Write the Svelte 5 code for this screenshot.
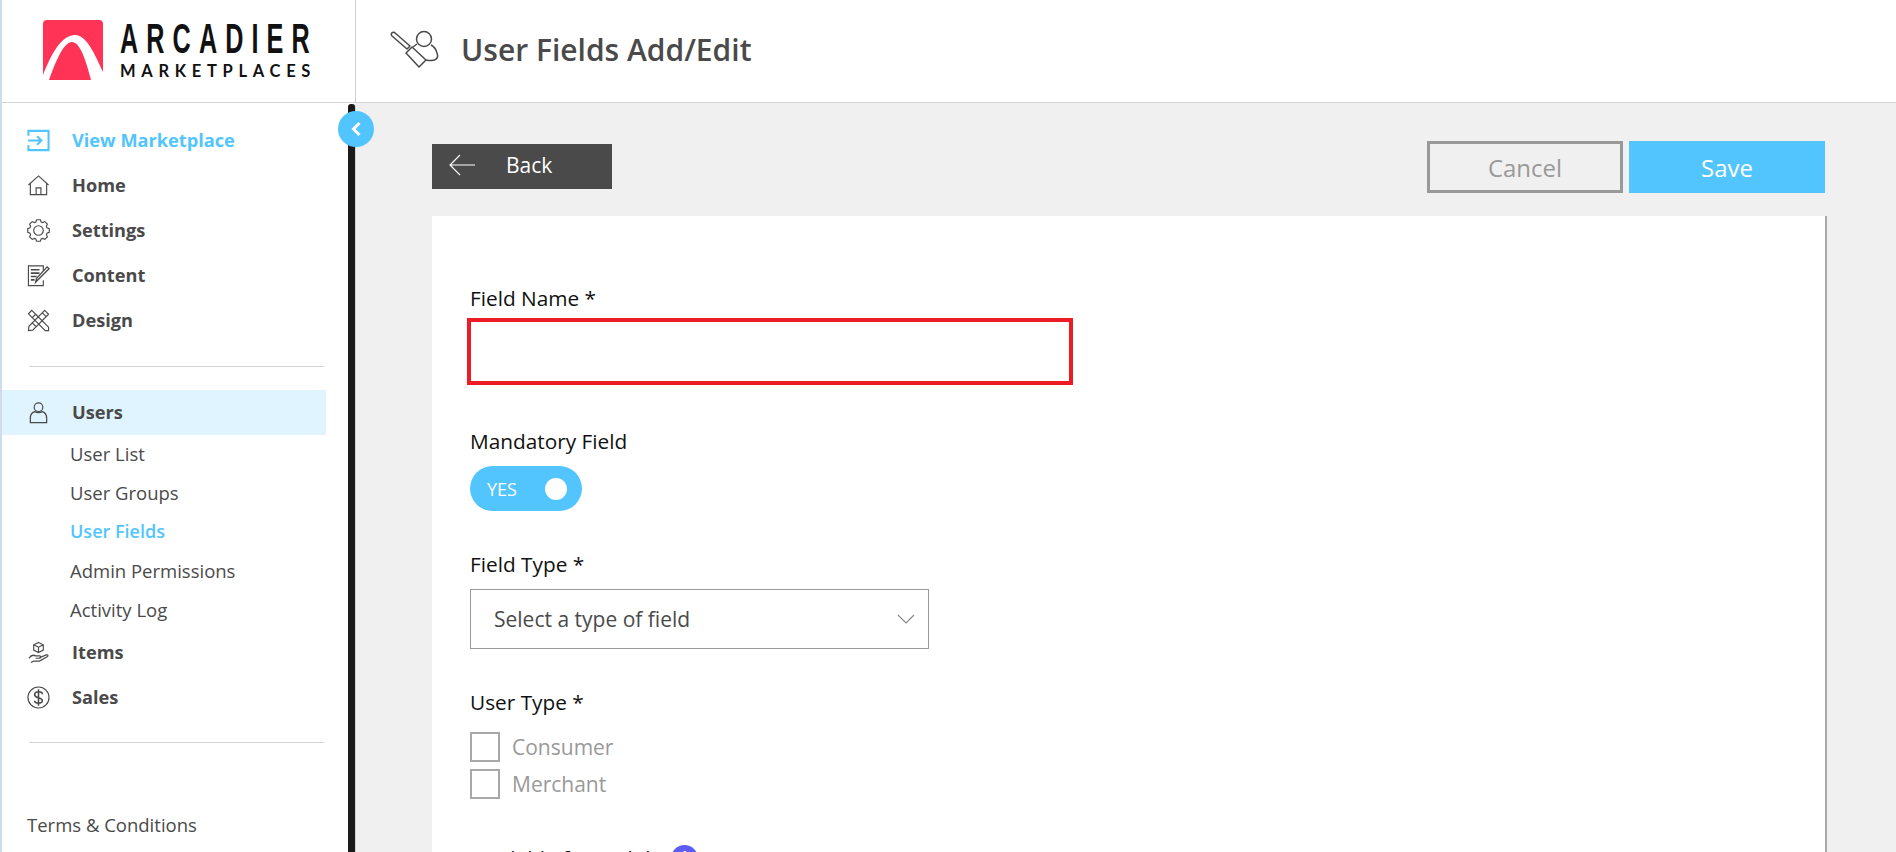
<script>
  const mainNav = [
    { label: 'Home', icon: 'home' },
    { label: 'Settings', icon: 'gear' },
    { label: 'Content', icon: 'content' },
    { label: 'Design', icon: 'design' }
  ];
  const userLinks = ['User List', 'User Groups', 'User Fields', 'Admin Permissions', 'Activity Log'];

  // cog outline with 8 teeth
  function cogPath() {
    const pts = [];
    for (let i = 0; i < 8; i++) {
      const a = (i * Math.PI) / 4;
      for (const [r, o] of [[9.3, -0.3], [11.4, -0.17], [11.4, 0.17], [9.3, 0.3]]) {
        pts.push((12 + r * Math.sin(a + o)).toFixed(2) + ' ' + (12 - r * Math.cos(a + o)).toFixed(2));
      }
    }
    return 'M' + pts.join('L') + 'z';
  }
</script>

{#snippet icon(name)}
  <svg class="nav-icon" viewBox="0 0 24 24" fill="none" stroke="currentColor" stroke-width="1.2">
    {#if name === 'view'}
      <path stroke-width="2.2" d="M1.500 7V2h21v20h-21v-5M1 12h14M10.500 7.500l4.500 4.500-4.500 4.500" />
    {:else if name === 'home'}
      <path d="M1.500 11.500L12 2l10.500 9.500M3.500 10v11.500h17V10M9.500 21.500v-7h5v7" />
    {:else if name === 'gear'}
      <circle cx="12" cy="12" r="5" />
      <path d={cogPath()} />
    {:else if name === 'content'}
      <path d="M17 7V2H1.500v20.500H17V17" />
      <path stroke-width="1.700" d="M4 6h9M4 9.500h9M4 13h6M4 16.500h4" />
      <path stroke-width="1.400" d="M9 19l1-4L21 3l2 2-11 11z" />
    {:else if name === 'design'}
      <path d="M5 1.500l4 4-3.500 3.500-4-4zM9 5.500L22.500 19v3.500H19L5.500 9" />
      <path d="M18.500 1.500l4 4L6 22l-4.500.5L2 18zM16 4l4 4M5 14l4 4" />
    {:else if name === 'users'}
      <circle cx="12" cy="6.500" r="4.500" />
      <path stroke-width="1.300" d="M3.500 22.500V18c0-4 2.500-6.500 5-7 1 1.500 6 1.500 7 0 2.500.5 5 3 5 7v4.500z" />
    {:else if name === 'items'}
      <path d="M12 1.500l5 2.500v5.500l-5 2.500-5-2.500V4zM7 4l5 2.500L17 4M12 6.500V12" />
      <path stroke-width="1.300" d="M2 18c2-3 5-3.500 7-2.500h4c2 0 2 2.500 0 2.500H9M13 17.500l7-3c2-.5 2.500 1 1 2l-8 4.500H7l-3 1.500" />
    {:else if name === 'sales'}
      <circle cx="12" cy="12" r="11" />
      <path stroke-width="1.600" d="M16 8.500C16 6.500 14 6 12 6S8 7 8 9c0 4.500 8 2 8 6.500 0 2-2 2.500-4 2.500s-4-.5-4-2.500M12 3.500v17" />
    {/if}
  </svg>
{/snippet}

<div class="page">
  <aside class="sidebar">
    <div class="logo">
      <svg class="logo-mark" viewBox="0 0 60 60">
        <rect width="60" height="60" rx="4" fill="#ff3355" />
        <path d="M0 55C8 35 18 15 32 15 44 15 52 35 60 52V60H48C42 36 36 22 29 22 20 22 12 44 6 60H0z" fill="#fff" />
      </svg>
      <div class="logo-text">
        <span class="logo-name">ARCADIER</span>
        <span class="logo-sub">MARKETPLACES</span>
      </div>
    </div>

    <nav class="nav">
      <a class="nav-item view">{@render icon('view')}View Marketplace</a>
      {#each mainNav as item}
        <a class="nav-item">{@render icon(item.icon)}{item.label}</a>
      {/each}
      <hr />
      <a class="nav-item active">{@render icon('users')}Users</a>
      <div class="sub">
        {#each userLinks as link}
          <a class:current={link === 'User Fields'}>{link}</a>
        {/each}
      </div>
      <a class="nav-item">{@render icon('items')}Items</a>
      <a class="nav-item">{@render icon('sales')}Sales</a>
      <hr class="second" />
      <a class="terms">Terms &amp; Conditions</a>
    </nav>

    <div class="rail"></div>
    <button class="collapse" aria-label="Collapse">
      <svg viewBox="0 0 12 16" width="12" height="16" fill="none" stroke="#fff" stroke-width="3">
        <path d="M9.500 2L3.500 8l6 6" />
      </svg>
    </button>
  </aside>

  <div class="main">
    <header class="topbar">
      <svg class="title-icon" viewBox="12 12 52 44" fill="none" stroke="#4a4a4a" stroke-width="1.500" stroke-linejoin="round">
        <path d="M15.500 20.500c-1-2 1-4 3-3L34 31l-3 3z" />
        <path d="M30 38l6-6 14 13-7 7z" />
        <circle cx="48" cy="24" r="7.500" />
        <path d="M50 45c10 2 13-2 11-7-1-4-4-7-6-8M41 29l-4 3" />
      </svg>
      <h1>User Fields Add/Edit</h1>
    </header>

    <div class="content">
      <div class="actions">
        <button class="back">
          <svg viewBox="0 0 28 24" width="28" height="24" fill="none" stroke="#fff" stroke-width="1.200">
            <path d="M27 12H2M12 2L2 12l10 10" />
          </svg>
          Back
        </button>
        <div class="right">
          <button class="cancel">Cancel</button>
          <button class="save">Save</button>
        </div>
      </div>

      <form class="card">
        <label class="field-label" for="name">Field Name *</label>
        <input id="name" class="name-input" type="text" />

        <div class="field-label mandatory">Mandatory Field</div>
        <div class="toggle"><span>YES</span><i></i></div>

        <div class="field-label type">Field Type *</div>
        <div class="select">
          <span>Select a type of field</span>
          <svg viewBox="0 0 18 10" width="18" height="10" fill="none" stroke="#888" stroke-width="1.100">
            <path d="M1 1l8 8 8-8" />
          </svg>
        </div>

        <div class="field-label user">User Type *</div>
        <div class="checks">
          <div class="check"><i></i>Consumer</div>
          <div class="check"><i></i>Merchant</div>
        </div>

        <div class="field-label mobile">Available for mobile <b>i</b></div>
      </form>
    </div>
  </div>
</div>

<style>
  :global(body) {
    margin: 0;
    overflow: hidden;
    background: #f0f0f0;
  }
  .page {
    display: flex;
    height: 852px;
    overflow: hidden;
    font-family: "Open Sans", "Noto Sans", sans-serif;
    color: #4a4a4a;
  }
  .sidebar {
    position: relative;
    flex: 0 0 355px;
    box-sizing: border-box;
    border-left: 2px solid #cfdcec;
    background: #fff;
  }
  .logo {
    display: flex;
    align-items: center;
    gap: 17px;
    box-sizing: border-box;
    height: 103px;
    padding: 0 0 2px 41px;
    border-bottom: 1px solid #d4d4d4;
    border-right: 1px solid #cfcfcf;
    margin-right: -1px;
  }
  .logo-mark {
    width: 60px;
    height: 60px;
    flex: none;
  }
  .logo-text {
    display: flex;
    flex-direction: column;
    color: #111;
  }
  .logo-name {
    font-family: "Liberation Sans", sans-serif;
    font-size: 42px;
    font-weight: 700;
    line-height: 42px;
    letter-spacing: 13.500px;
    transform: scaleX(.6);
    transform-origin: left;
    white-space: nowrap;
    width: 190px;
  }
  .logo-sub {
    font-family: Lato, sans-serif;
    font-size: 16.500px;
    font-weight: 700;
    line-height: 22px;
    letter-spacing: 5.700px;
    white-space: nowrap;
  }
  .nav {
    padding-top: 15px;
  }
  .nav-item {
    display: flex;
    align-items: center;
    box-sizing: border-box;
    width: 324px;
    height: 45px;
    padding: 0 0 1px 25px;
    font-size: 18.200px;
    font-weight: 700;
    color: #4a4a4a;
  }
  .nav-icon {
    width: 23px;
    height: 23px;
    margin-right: 22px;
    flex: none;
  }
  .view {
    color: #52c5ff;
  }
  .active {
    background: #dff4fe;
  }
  hr {
    width: 295px;
    margin: 23px 0 23px 27px;
    border: 0;
    border-top: 1px solid #d4d4d4;
  }
  hr.second {
    margin: 22px 0 0 27px;
  }
  .sub {
    display: flex;
    flex-direction: column;
    padding: 0 0 0 68px;
  }
  .sub a {
    height: 39px;
    line-height: 37px;
    font-size: 18.500px;
  }
  .sub a.current {
    color: #52c5ff;
    font-size: 18px;
    font-weight: 600;
  }
  .terms {
    display: block;
    margin: 70px 0 0 25px;
    font-size: 18.500px;
    line-height: 24px;
  }
  .rail {
    position: absolute;
    top: 104px;
    right: 0;
    bottom: 0;
    width: 7px;
    border-radius: 3px 3px 0 0;
    background: #1a1a1a;
    box-shadow: 1px 0 0 #d4d4d4;
  }
  .collapse {
    position: absolute;
    top: 111px;
    right: -19px;
    display: flex;
    align-items: center;
    justify-content: center;
    width: 36px;
    height: 36px;
    padding: 0;
    border: 0;
    border-radius: 50%;
    background: #52c5ff;
  }
  .main {
    flex: 1;
    min-width: 0;
  }
  .topbar {
    display: flex;
    align-items: center;
    box-sizing: border-box;
    height: 103px;
    padding-left: 33px;
    background: #fff;
    border-bottom: 1px solid #d4d4d4;
  }
  .title-icon {
    width: 52px;
    height: 44px;
    margin: 0 21px 4px 0;
  }
  h1 {
    margin: 0 0 4px;
    font-size: 30px;
    font-weight: 600;
    color: #4a4a4a;
  }
  .content {
    padding: 38px 0 0 77px;
  }
  .actions {
    display: flex;
    justify-content: space-between;
    align-items: flex-start;
    width: 1393px;
    height: 75px;
  }
  .back {
    display: flex;
    align-items: center;
    gap: 30px;
    box-sizing: border-box;
    width: 180px;
    height: 45px;
    margin-top: 3px;
    padding: 0 0 3px 16px;
    border: 0;
    background: #4a4a4a;
    color: #fff;
    font: 21px "Open Sans", sans-serif;
  }
  .right {
    display: flex;
    gap: 6px;
  }
  .cancel, .save {
    width: 196px;
    height: 52px;
    box-sizing: border-box;
    font: 24px "Open Sans", sans-serif;
  }
  .cancel {
    border: 3px solid #999;
    background: transparent;
    color: #999;
  }
  .save {
    border: 0;
    background: #52c5ff;
    color: #fff;
  }
  .card {
    box-sizing: border-box;
    width: 1395px;
    height: 700px;
    padding: 68px 0 0 38px;
    background: #fff;
    border-right: 2px solid #a8a8a8;
  }
  .field-label {
    display: block;
    font-size: 20.800px;
    line-height: 28px;
    color: #111;
  }
  .name-input {
    display: block;
    box-sizing: border-box;
    width: 606px;
    height: 67px;
    margin: 6px 0 0 -3px;
    border: 4px solid #ed1c24;
    background: #fff;
    outline: 0;
  }
  .mandatory {
    margin-top: 42px;
  }
  .toggle {
    display: flex;
    align-items: center;
    justify-content: space-between;
    box-sizing: border-box;
    width: 112px;
    height: 45px;
    margin-top: 11px;
    padding: 0 15px 0 17px;
    border-radius: 23px;
    background: #52c5ff;
    color: #fff;
    font-size: 18px;
  }
  .toggle i {
    width: 22px;
    height: 22px;
    border-radius: 50%;
    background: #fff;
  }
  .type {
    margin-top: 39px;
  }
  .select {
    display: flex;
    align-items: center;
    justify-content: space-between;
    box-sizing: border-box;
    width: 459px;
    height: 60px;
    margin-top: 11px;
    padding: 0 13px 0 23px;
    border: 1px solid #999;
    font-size: 21px;
    color: #4a4a4a;
  }
  .user {
    margin-top: 39px;
  }
  .checks {
    display: flex;
    flex-direction: column;
    gap: 7px;
    margin-top: 16px;
  }
  .check {
    display: flex;
    align-items: center;
    gap: 12px;
    height: 30px;
    font-size: 21px;
    color: #999;
  }
  .check i {
    box-sizing: border-box;
    width: 30px;
    height: 30px;
    border: 2px solid #a8a8a8;
  }
  .mobile {
    margin-top: 45px;
    display: flex;
    align-items: center;
    gap: 9px;
  }
  .mobile b {
    display: flex;
    align-items: center;
    justify-content: center;
    width: 27px;
    height: 27px;
    border-radius: 50%;
    background: #5c5cf5;
    color: #fff;
    font-size: 18px;
  }
</style>
